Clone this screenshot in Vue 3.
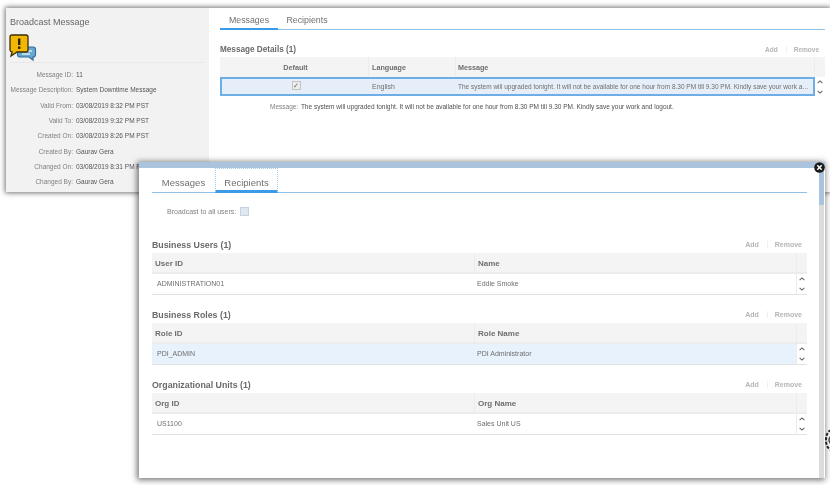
<script setup>
const details = [
  ['Message ID:', '11'],
  ['Message Description:', 'System Downtime Message'],
  ['Valid From:', '03/08/2019 8:32 PM PST'],
  ['Valid To:', '03/08/2019 9:32 PM PST'],
  ['Created On:', '03/08/2019 8:26 PM PST'],
  ['Created By:', 'Gaurav Gera'],
  ['Changed On:', '03/08/2019 8:31 PM PST'],
  ['Changed By:', 'Gaurav Gera']
]

const sections = [
  { title: 'Business Users (1)', cols: ['User ID', 'Name'], row: ['ADMINISTRATION01', 'Eddie Smoke'], selected: false },
  { title: 'Business Roles (1)', cols: ['Role ID', 'Role Name'], row: ['PDI_ADMIN', 'PDI Administrator'], selected: true },
  { title: 'Organizational Units (1)', cols: ['Org ID', 'Org Name'], row: ['US1100', 'Sales Unit US'], selected: false }
]

const longMessage = 'The system will upgraded tonight. It will not be available for one hour from 8.30 PM till 9.30 PM. Kindly save your work and logout.'
</script>

<template>
  <div class="page">
    <div class="back-window">
      <aside class="side">
        <h1 class="side-title">Broadcast Message</h1>
        <svg class="side-icon" width="28" height="28" viewBox="0 0 28 28">
          <path d="M11 13h13a2.500 2.500 0 0 1 2.500 2.500v5a2.500 2.500 0 0 1-2.500 2.500v3l-4-3h-9a2.500 2.500 0 0 1-2.500-2.500v-5A2.500 2.500 0 0 1 11 13z" fill="#6aa8d4" stroke="#2f6f9f" stroke-width="1.200"/>
          <path d="M13 17h10M13 20h8" stroke="#d5e8f5" stroke-width="1.500"/>
          <path d="M3 1h14a2 2 0 0 1 2 2v13a2 2 0 0 1-2 2H8l-6 4 1-4.200A2 2 0 0 1 1 16V3a2 2 0 0 1 2-2z" fill="#f2b705" stroke="#3a3000" stroke-width="1.300"/>
          <rect x="9" y="4.500" width="2.400" height="6.500" fill="#2b2400"/>
          <rect x="9" y="12.500" width="2.400" height="2.400" fill="#2b2400"/>
        </svg>
        <dl class="facts">
          <div v-for="item in details" :key="item[0]" class="fact">
            <dt>{{ item[0] }}</dt>
            <dd>{{ item[1] }}</dd>
          </div>
        </dl>
      </aside>

      <main class="content">
        <div class="tabs">
          <span class="tab active">Messages</span>
          <span class="tab">Recipients</span>
        </div>
        <div class="bar">
          <h2>Message Details (1)</h2>
          <div class="actions"><span>Add</span><span class="remove">Remove</span></div>
        </div>
        <div class="msg-table">
          <div class="msg-row msg-head">
            <div class="center">Default</div>
            <div>Language</div>
            <div>Message</div>
            <div class="scroll-cell"></div>
          </div>
          <div class="msg-row msg-body">
            <div class="center"><span class="check">✓</span></div>
            <div>English</div>
            <div class="msg-text"><span class="ellipsis">{{ longMessage }}</span></div>
            <div class="scroll-cell arrows">
              <svg width="6" height="4" viewBox="0 0 6 4"><path d="M.6 3.200 3 .9l2.400 2.300" fill="none" stroke="#666" stroke-width="1.100"/></svg>
              <svg width="6" height="4" viewBox="0 0 6 4"><path d="M.6.800 3 3.100 5.400.8" fill="none" stroke="#666" stroke-width="1.100"/></svg>
            </div>
          </div>
        </div>
        <p class="msg-line"><span>Message:</span> {{ longMessage }}</p>
      </main>
    </div>

    <section class="dialog">
      <div class="dialog-inner">
        <div class="tabs dialog-tabs">
          <span class="tab">Messages</span>
          <span class="tab active focused">Recipients</span>
        </div>
        <div class="broadcast">
          <span>Broadcast to all users:</span>
          <span class="box"></span>
        </div>
        <div v-for="section in sections" :key="section.title" class="section">
          <div class="bar">
            <h2>{{ section.title }}</h2>
            <div class="actions"><span>Add</span><span class="remove">Remove</span></div>
          </div>
          <div class="grid-row grid-head">
            <div>{{ section.cols[0] }}</div>
            <div>{{ section.cols[1] }}</div>
            <div class="scroll-cell"></div>
          </div>
          <div class="grid-row grid-body" :class="{ selected: section.selected }">
            <div>{{ section.row[0] }}</div>
            <div>{{ section.row[1] }}</div>
            <div class="scroll-cell arrows">
              <svg width="6" height="4" viewBox="0 0 6 4"><path d="M.6 3.200 3 .9l2.400 2.300" fill="none" stroke="#666" stroke-width="1.100"/></svg>
              <svg width="6" height="4" viewBox="0 0 6 4"><path d="M.6.800 3 3.100 5.400.8" fill="none" stroke="#666" stroke-width="1.100"/></svg>
            </div>
          </div>
        </div>
      </div>
      <div class="dialog-track">
        <div class="dialog-thumb"></div>
      </div>
      <svg class="close" width="11" height="11" viewBox="0 0 11 11">
        <circle cx="5.500" cy="5.500" r="5.300" fill="#1a1a1a"/>
        <path d="M3.300 3.300l4.400 4.400M7.700 3.300 3.300 7.700" stroke="#fff" stroke-width="1.500"/>
      </svg>
    </section>

    <svg class="cursor" width="6" height="22" viewBox="0 0 6 22">
      <path d="M6 1C2 3 1 7 1 11s1 8 5 10" fill="none" stroke="#222" stroke-width="2" stroke-dasharray="3 1.500"/>
      <path d="M6 7C4.500 8.500 4 10 4 11s.5 2.500 2 4" fill="none" stroke="#444" stroke-width="1.500"/>
    </svg>
  </div>
</template>

<style>
body {
  background: #fff;
}
</style>

<style scoped>
.page {
  position: relative;
  width: 830px;
  height: 485px;
  overflow: hidden;
  background: #fff;
  font-family: "Liberation Sans", Arial, sans-serif;
  color: #555;
  padding-top: 8px;
  box-sizing: border-box;
  filter: blur(0.35px);
}

.back-window {
  display: flex;
  height: 184px;
  margin-left: 6px;
  background: #fff;
  box-shadow: 0 0 5px 1px rgba(0, 0, 0, 0.55);
}

.side {
  width: 203px;
  flex-shrink: 0;
  background: #f2f2f2;
  padding: 7px 4px 0 4px;
  box-sizing: border-box;
}

.side-title {
  margin: 0;
  font-size: 9px;
  font-weight: normal;
  line-height: 14px;
  color: #666;
}

.side-icon {
  display: block;
  margin-top: 5px;
  margin-left: -1px;
}

.facts {
  margin: 0;
  border-top: 1px solid #e9e9e9;
  padding-top: 4px;
}

.fact {
  display: flex;
  height: 15.300px;
  align-items: center;
  font-size: 6.500px;
}

.fact dt {
  width: 63px;
  text-align: right;
  color: #808080;
  white-space: nowrap;
  flex-shrink: 0;
}

.fact dd {
  margin: 0 0 0 3px;
  color: #555;
  white-space: nowrap;
}

.content {
  flex: 1;
  min-width: 0;
  padding: 4px 5px 0 11px;
}

.tabs {
  display: flex;
  height: 17px;
  border-bottom: 1px solid #8fc2e8;
}

.tab {
  width: 58px;
  text-align: center;
  font-size: 8.800px;
  line-height: 16px;
  color: #707070;
  box-sizing: border-box;
  height: 18px;
}

.tab.active {
  border-bottom: 2px solid #3c9be8;
}

.bar {
  display: flex;
  justify-content: space-between;
  align-items: center;
  box-sizing: border-box;
  height: 15px;
  padding-bottom: 2px;
}

.content .bar {
  margin-top: 13px;
  height: 14px;
}

.bar h2 {
  margin: 0;
  font-size: 8.200px;
  font-weight: bold;
  color: #6a6a6a;
}

.actions {
  display: flex;
  font-size: 6.500px;
  font-weight: bold;
  color: #b5b5b5;
  padding-right: 6px;
}

.remove {
  margin-left: 8px;
  padding-left: 7px;
  border-left: 1px solid #f0f0f0;
}

.msg-row {
  display: grid;
  grid-template-columns: 149px 87px 359px 10px;
  align-items: center;
  font-size: 7px;
}

.msg-row > div {
  padding-left: 3px;
  min-width: 0;
  box-sizing: border-box;
}

.msg-head {
  height: 20px;
  background: #f4f4f4;
  font-size: 7.200px;
  font-weight: bold;
  color: #6e6e6e;
}

.msg-head > div {
  height: 100%;
  line-height: 21px;
  border-right: 1px solid #ececec;
}

.msg-head > div:nth-child(3) {
  padding-left: 2px;
}

.msg-head > div.scroll-cell {
  border-right: none;
}

.msg-body {
  height: 19px;
  color: #6e6e6e;
}

.msg-body > div:not(.scroll-cell) {
  background: #e6eff9;
  height: 19px;
  line-height: 15px;
  border-top: 2px solid #6eaee6;
  border-bottom: 2px solid #6eaee6;
}

.msg-body > div:first-child {
  border-left: 2px solid #6eaee6;
  padding-right: 2px;
}

.msg-body > .msg-text {
  border-right: 2px solid #6eaee6;
  padding-left: 2px;
}

.ellipsis {
  display: block;
  overflow: hidden;
  white-space: nowrap;
  text-overflow: ellipsis;
  font-size: 6.500px;
  padding-right: 2px;
}

.center {
  text-align: center;
}

.check {
  display: inline-block;
  width: 7px;
  height: 7px;
  line-height: 7px;
  font-size: 7px;
  border: 1px solid #c4c4c4;
  background: #ececec;
  color: #666;
  vertical-align: 1px;
}

.arrows {
  display: flex;
  flex-direction: column;
  align-items: center;
  justify-content: center;
  gap: 6px;
  padding-left: 0 !important;
}

.msg-line {
  margin: 6px 0 0 50px;
  font-size: 6.500px;
  line-height: 10px;
  color: #505050;
  white-space: nowrap;
}

.msg-line span {
  color: #808080;
  margin-right: 1px;
}

.dialog {
  position: absolute;
  left: 139px;
  top: 162px;
  width: 686px;
  height: 316px;
  background: #fff;
  border-top: 6px solid #a9c4dc;
  box-sizing: border-box;
  box-shadow: -1px 1px 6px 1px rgba(0, 0, 0, 0.55);
}

.dialog-inner {
  padding: 0 18px 0 13px;
}

.dialog-tabs {
  height: 24px;
}

.dialog-tabs .tab {
  width: 63px;
  height: 25px;
  font-size: 9.500px;
  line-height: 30px;
}

.tab.focused {
  border: 1px dotted #a8cbe6;
  border-bottom: 3px solid #3c9be8;
  line-height: 28px;
}

.broadcast {
  display: flex;
  align-items: center;
  gap: 4px;
  margin: 13px 0 0 15px;
  font-size: 7px;
  color: #808080;
  height: 10px;
}

.box {
  width: 7px;
  height: 7px;
  border: 1px solid #c5d3e0;
  background: #dfe8f1;
}

.section {
  margin-top: 13px;
}

.broadcast + .section {
  margin-top: 22px;
}

.section .bar {
  height: 15px;
}

.section .bar h2 {
  font-size: 8.800px;
}

.section .actions {
  padding-right: 5px;
  font-size: 7px;
}

.grid-row {
  display: grid;
  grid-template-columns: 323px 1fr 10px;
  align-items: center;
  font-size: 7px;
}

.grid-row > div {
  padding-left: 3px;
  box-sizing: border-box;
  height: 100%;
}

.grid-head {
  height: 21px;
  background: #f4f4f4;
  border-bottom: 2px solid #ececec;
  box-sizing: border-box;
  font-size: 8px;
  font-weight: bold;
  color: #6e6e6e;
}

.grid-head > div {
  line-height: 21px;
  border-right: 1px solid #ececec;
}

.grid-head > div.scroll-cell {
  border-right: none;
}

.grid-body {
  height: 21px;
  border-bottom: 1px solid #e2e2e2;
  box-sizing: border-box;
  color: #6e6e6e;
}

.grid-body > div:not(.scroll-cell) {
  line-height: 20px;
  padding-left: 5px;
}

.grid-body > div:nth-child(2) {
  padding-left: 2px;
  border-right: 1px solid #ececec;
}

.grid-body.selected > div:not(.scroll-cell) {
  background: #e8f2fc;
}

.dialog-track {
  position: absolute;
  top: 0;
  right: 1px;
  bottom: 0;
  width: 5px;
  background: #dcdcdc;
}

.dialog-thumb {
  height: 37px;
  background: #a9c4dc;
}

.close {
  position: absolute;
  top: -6px;
  right: 0;
}

.cursor {
  position: absolute;
  left: 825px;
  top: 429px;
}
</style>
